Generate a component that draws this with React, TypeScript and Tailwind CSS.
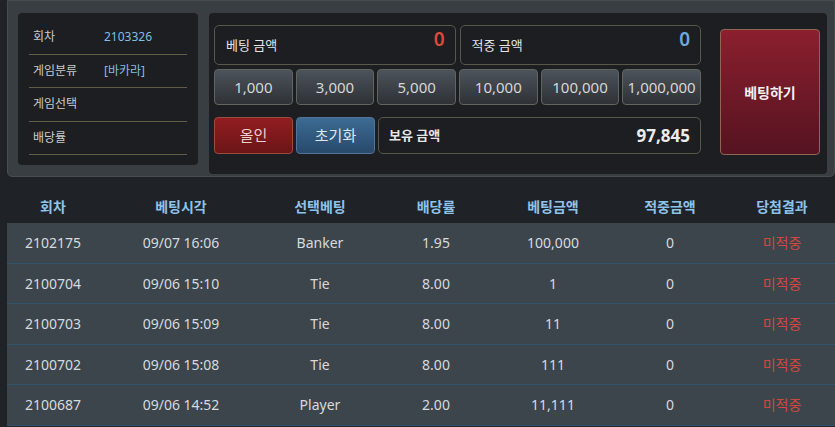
const info = [
  { label: '회차', value: '2103326' },
  { label: '게임분류', value: '[바카라]' },
  { label: '게임선택', value: '' },
  { label: '배당률', value: '' },
];

const chips = ['1,000', '3,000', '5,000', '10,000', '100,000', '1,000,000'];

const headers = ['회차', '베팅시각', '선택베팅', '배당률', '베팅금액', '적중금액', '당첨결과'];

const rows = [
  ['2102175', '09/07 16:06', 'Banker', '1.95', '100,000', '0'],
  ['2100704', '09/06 15:10', 'Tie', '8.00', '1', '0'],
  ['2100703', '09/06 15:09', 'Tie', '8.00', '11', '0'],
  ['2100702', '09/06 15:08', 'Tie', '8.00', '111', '0'],
  ['2100687', '09/06 14:52', 'Player', '2.00', '11,111', '0'],
];

const cols = 'grid grid-cols-[92px_164px_114px_118px_116px_118px_106px]';

function App() {
  return (
    <div
      className="min-h-screen w-[835px] h-[427px] overflow-hidden bg-[#1f2227] text-[#d6dadf]"
      style={{ fontFamily: '"Noto Sans", "Noto Sans CJK KR", sans-serif' }}
    >
      {/* Top betting panel */}
      <div className="ml-[7px] h-[177px] flex items-start gap-[11px] pt-[12px] pl-[10px] pr-[7px] bg-[#393e42] border border-[#474c4e] rounded-b-[5px]">
        {/* Game info */}
        <div className="w-[182px] bg-[#1c1e21] rounded-[4px] px-[11px] pt-[8px] pb-[10px]">
          {info.map((r) => (
            <div key={r.label} className="h-[33.5px] flex items-center pl-[4px] border-b border-[#5f5e45] text-[12px]">
              <span className="w-[71px] text-[#c9cbcc]">{r.label}</span>
              <span className="text-[#85bde3]">{r.value}</span>
            </div>
          ))}
        </div>

        {/* Betting controls */}
        <div className="flex-1 h-[161px] bg-[#1c1e21] rounded-[4px] flex pl-[5px] pr-[7px] pt-[12px]">
          <div className="w-[487px] flex flex-col">
            <div className="flex gap-[4px] h-[40px]">
              <div className="flex-1 flex justify-between border border-[#57574a] rounded-[5px] pl-[11px] pr-[10px]">
                <span className="self-center mt-[1px] text-[13px] text-[#e4e4e4]">베팅 금액</span>
                <span className="pt-[1px] text-[19px] leading-[24px] font-semibold text-[#dc4a3e]">0</span>
              </div>
              <div className="flex-1 flex justify-between border border-[#57574a] rounded-[5px] pl-[11px] pr-[10px]">
                <span className="self-center mt-[1px] text-[13px] text-[#e4e4e4]">적중 금액</span>
                <span className="pt-[1px] text-[19px] leading-[24px] font-semibold text-[#6ea9de]">0</span>
              </div>
            </div>

            <div className="grid grid-cols-6 gap-[3px] mt-[4px] h-[36px]">
              {chips.map((c) => (
                <button
                  key={c}
                  className="rounded-[4px] border border-[#60655f] bg-gradient-to-b from-[#4c535a] to-[#2e3237] text-[15px] text-[#d6d6d6]"
                >
                  {c}
                </button>
              ))}
            </div>

            <div className="flex gap-[3px] mt-[12px] h-[37px]">
              <button className="w-[79px] rounded-[4px] border border-[#9b4c3e] bg-gradient-to-b from-[#911d20] to-[#6c1518] text-[15px] text-[#ecd0cf]">
                올인
              </button>
              <button className="w-[79px] rounded-[4px] border border-[#52739a] bg-gradient-to-b from-[#3c6b93] to-[#284a6b] text-[15px] text-[#dde7ef]">
                초기화
              </button>
              <div className="flex-1 flex items-center justify-between border border-[#57574a] rounded-[5px] pl-[10px] pr-[10px]">
                <span className="text-[13px] font-bold text-[#e6e6e6]">보유 금액</span>
                <span className="text-[17px] font-bold text-[#ececec]">97,845</span>
              </div>
            </div>
          </div>

          <button className="ml-[19px] mt-[4px] w-[100px] h-[126px] rounded-[4px] border border-[#8e6651] bg-gradient-to-b from-[#8b1f2e] to-[#561321] text-[14px] font-bold text-[#f0f0f0]">
            베팅하기
          </button>
        </div>
      </div>

      {/* History table */}
      <div className="ml-[7px]">
        <div className={`${cols} h-[46px] pt-[12px] items-center text-[14px] font-bold text-[#8dc3ea]`}>
          {headers.map((h) => (
            <div key={h} className="text-center">{h}</div>
          ))}
        </div>
        {rows.map((r) => (
          <div key={r[0]} className={`${cols} h-[40.5px] items-center bg-[#3d454c] border-b border-[#2f5470] text-[14px]`}>
            {r.map((v, i) => (
              <div key={i} className="text-center">{v}</div>
            ))}
            <div className="text-center text-[#d4473d]">미적중</div>
          </div>
        ))}
      </div>
    </div>
  );
}

export default App;
